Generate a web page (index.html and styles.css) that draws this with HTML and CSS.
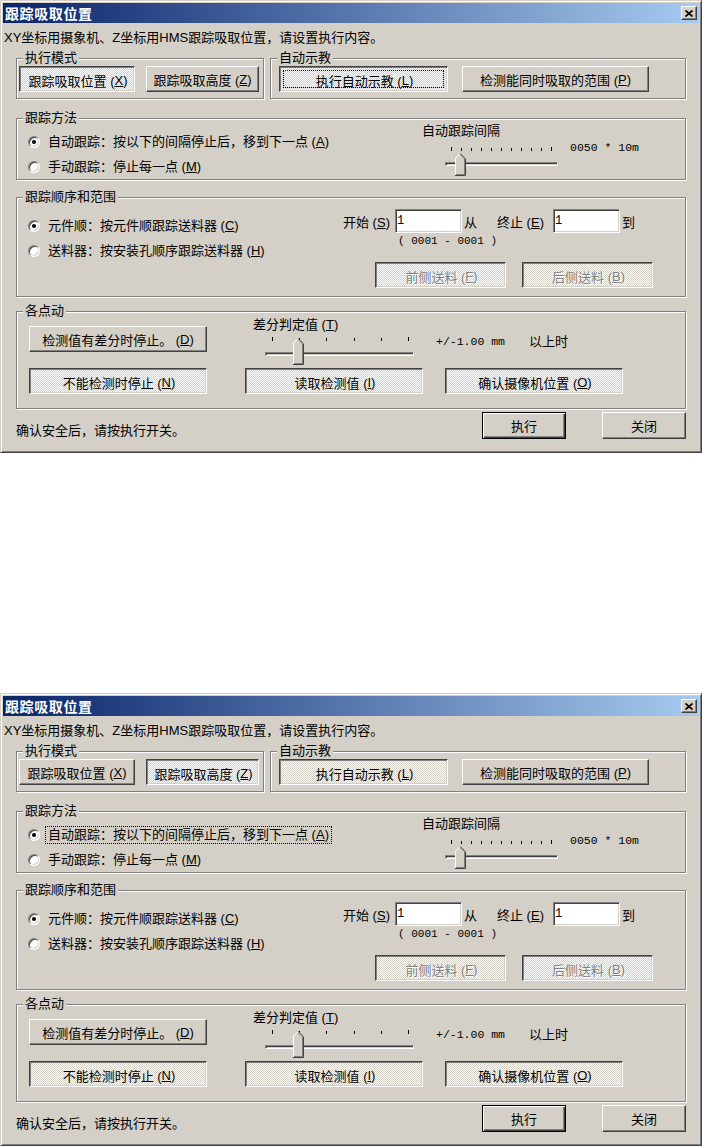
FILE: index.html
```html
<!DOCTYPE html>
<html lang="zh-CN">
<head>
    <meta charset="UTF-8">
    <title>跟踪吸取位置</title>
    <link rel="stylesheet" href="styles.css">
</head>
<body>
<div class="page">

<!-- 状态 1：执行自动示教 -->
<div class="dialog">
    <div class="titlebar">
        <span class="title">跟踪吸取位置</span>
        <span class="close"><svg width="8" height="7" viewBox="0 0 8 7"><path d="M0.5 0.5l7 6M7.5 0.5l-7 6" stroke="#000" stroke-width="1.7"/></svg></span>
    </div>
    <div class="client">
        <div class="desc">XY坐标用摄象机、Z坐标用HMS跟踪吸取位置，请设置执行内容。</div>

        <div class="row-top">
            <div class="group g-mode">
                <div class="legend">执行模式</div>
                <div class="btns">
                    <span class="btn on w-x">跟踪吸取位置 (<u>X</u>)</span>
                    <span class="btn w-z">跟踪吸取高度 (<u>Z</u>)</span>
                </div>
            </div>
            <div class="group g-teach">
                <div class="legend">自动示教</div>
                <div class="btns">
                    <span class="btn on focus w-l">执行自动示教 (<u>L</u>)</span>
                    <span class="btn w-p">检测能同时吸取的范围 (<u>P</u>)</span>
                </div>
            </div>
        </div>

        <div class="group g-method">
            <div class="legend">跟踪方法</div>
            <div class="method-body">
                <div class="radios r-method">
                    <div class="radio"><span class="dot checked"></span><span class="rlabel">自动跟踪：按以下的间隔停止后，移到下一点 (<u>A</u>)</span></div>
                    <div class="radio"><span class="dot"></span><span class="rlabel">手动跟踪：停止每一点 (<u>M</u>)</span></div>
                </div>
                <div class="interval">
                    <div class="cap">自动跟踪间隔</div>
                    <div class="slide-row">
                        <div class="trackbar tb-interval">
                            <div class="ticks"><i></i><i></i><i></i><i></i><i></i><i></i><i></i><i></i><i></i><i></i><i></i></div>
                            <div class="groove"></div>
                            <svg class="thumb" width="11" height="23" viewBox="0 0 11 23"><path d="M0 23V5L5 0L11 6V23Z" fill="#d4d0c8"/><path d="M0.5 22V5.2L5.2 0.5" stroke="#fff" fill="none"/><path d="M5.2 0.5L10.5 5.8V22.5H0" stroke="#404040" fill="none"/><path d="M5.5 1.8L9.5 5.8V21.5H1" stroke="#808080" fill="none"/></svg>
                        </div>
                        <span class="value">0050 * 10m</span>
                    </div>
                </div>
            </div>
        </div>

        <div class="group g-order">
            <div class="legend">跟踪顺序和范围</div>
            <div class="order-body">
                <div class="radios r-order">
                    <div class="radio"><span class="dot checked"></span><span class="rlabel">元件顺：按元件顺跟踪送料器 (<u>C</u>)</span></div>
                    <div class="radio"><span class="dot"></span><span class="rlabel">送料器：按安装孔顺序跟踪送料器 (<u>H</u>)</span></div>
                </div>
                <div class="range">
                    <div class="range-row">
                        <span class="lab-s">开始 (<u>S</u>)</span>
                        <input class="field" type="text" value="1">
                        <span class="lab-from">从</span>
                        <span class="lab-e">终止 (<u>E</u>)</span>
                        <input class="field" type="text" value="1">
                        <span class="lab-to">到</span>
                    </div>
                    <div class="range-hint">( 0001 - 0001 )</div>
                    <div class="side-btns">
                        <span class="btn on disabled w-side">前侧送料 (<u>F</u>)</span>
                        <span class="btn on disabled w-side">后侧送料 (<u>B</u>)</span>
                    </div>
                </div>
            </div>
        </div>

        <div class="group g-jog">
            <div class="legend">各点动</div>
            <div class="jog-row1">
                <span class="btn w-jog btn-diff">检测值有差分时停止。 (<u>D</u>)</span>
                <div class="diff">
                    <div class="cap">差分判定值 (<u>T</u>)</div>
                    <div class="slide-row">
                        <div class="trackbar tb-diff">
                            <div class="ticks"><i></i><i></i><i></i><i></i><i></i><i></i></div>
                            <div class="groove"></div>
                            <svg class="thumb" width="11" height="27" viewBox="0 0 11 27"><path d="M0 27V5L5 0L11 6V27Z" fill="#d4d0c8"/><path d="M0.5 26V5.2L5.2 0.5" stroke="#fff" fill="none"/><path d="M5.2 0.5L10.5 5.8V26.5H0" stroke="#404040" fill="none"/><path d="M5.5 1.8L9.5 5.8V25.5H1" stroke="#808080" fill="none"/></svg>
                        </div>
                        <span class="value">+/-1.00 mm</span>
                        <span class="unit">以上时</span>
                    </div>
                </div>
            </div>
            <div class="jog-row2">
                <span class="btn on w-jog">不能检测时停止 (<u>N</u>)</span>
                <span class="btn on w-jog">读取检测值 (<u>I</u>)</span>
                <span class="btn on w-jog">确认摄像机位置 (<u>O</u>)</span>
            </div>
        </div>

        <div class="footer">
            <span class="hint">确认安全后，请按执行开关。</span>
            <span class="btn default w-foot">执行</span>
            <span class="btn w-foot">关闭</span>
        </div>
    </div>
</div>

<!-- 状态 2：跟踪吸取高度 -->
<div class="dialog">
    <div class="titlebar">
        <span class="title">跟踪吸取位置</span>
        <span class="close"><svg width="8" height="7" viewBox="0 0 8 7"><path d="M0.5 0.5l7 6M7.5 0.5l-7 6" stroke="#000" stroke-width="1.7"/></svg></span>
    </div>
    <div class="client">
        <div class="desc">XY坐标用摄象机、Z坐标用HMS跟踪吸取位置，请设置执行内容。</div>

        <div class="row-top">
            <div class="group g-mode">
                <div class="legend">执行模式</div>
                <div class="btns">
                    <span class="btn w-x">跟踪吸取位置 (<u>X</u>)</span>
                    <span class="btn on w-z">跟踪吸取高度 (<u>Z</u>)</span>
                </div>
            </div>
            <div class="group g-teach">
                <div class="legend">自动示教</div>
                <div class="btns">
                    <span class="btn on w-l">执行自动示教 (<u>L</u>)</span>
                    <span class="btn w-p">检测能同时吸取的范围 (<u>P</u>)</span>
                </div>
            </div>
        </div>

        <div class="group g-method">
            <div class="legend">跟踪方法</div>
            <div class="method-body">
                <div class="radios r-method">
                    <div class="radio"><span class="dot checked"></span><span class="rlabel focus">自动跟踪：按以下的间隔停止后，移到下一点 (<u>A</u>)</span></div>
                    <div class="radio"><span class="dot"></span><span class="rlabel">手动跟踪：停止每一点 (<u>M</u>)</span></div>
                </div>
                <div class="interval">
                    <div class="cap">自动跟踪间隔</div>
                    <div class="slide-row">
                        <div class="trackbar tb-interval">
                            <div class="ticks"><i></i><i></i><i></i><i></i><i></i><i></i><i></i><i></i><i></i><i></i><i></i></div>
                            <div class="groove"></div>
                            <svg class="thumb" width="11" height="23" viewBox="0 0 11 23"><path d="M0 23V5L5 0L11 6V23Z" fill="#d4d0c8"/><path d="M0.5 22V5.2L5.2 0.5" stroke="#fff" fill="none"/><path d="M5.2 0.5L10.5 5.8V22.5H0" stroke="#404040" fill="none"/><path d="M5.5 1.8L9.5 5.8V21.5H1" stroke="#808080" fill="none"/></svg>
                        </div>
                        <span class="value">0050 * 10m</span>
                    </div>
                </div>
            </div>
        </div>

        <div class="group g-order">
            <div class="legend">跟踪顺序和范围</div>
            <div class="order-body">
                <div class="radios r-order">
                    <div class="radio"><span class="dot checked"></span><span class="rlabel">元件顺：按元件顺跟踪送料器 (<u>C</u>)</span></div>
                    <div class="radio"><span class="dot"></span><span class="rlabel">送料器：按安装孔顺序跟踪送料器 (<u>H</u>)</span></div>
                </div>
                <div class="range">
                    <div class="range-row">
                        <span class="lab-s">开始 (<u>S</u>)</span>
                        <input class="field" type="text" value="1">
                        <span class="lab-from">从</span>
                        <span class="lab-e">终止 (<u>E</u>)</span>
                        <input class="field" type="text" value="1">
                        <span class="lab-to">到</span>
                    </div>
                    <div class="range-hint">( 0001 - 0001 )</div>
                    <div class="side-btns">
                        <span class="btn on disabled w-side">前侧送料 (<u>F</u>)</span>
                        <span class="btn on disabled w-side">后侧送料 (<u>B</u>)</span>
                    </div>
                </div>
            </div>
        </div>

        <div class="group g-jog">
            <div class="legend">各点动</div>
            <div class="jog-row1">
                <span class="btn w-jog btn-diff">检测值有差分时停止。 (<u>D</u>)</span>
                <div class="diff">
                    <div class="cap">差分判定值 (<u>T</u>)</div>
                    <div class="slide-row">
                        <div class="trackbar tb-diff">
                            <div class="ticks"><i></i><i></i><i></i><i></i><i></i><i></i></div>
                            <div class="groove"></div>
                            <svg class="thumb" width="11" height="27" viewBox="0 0 11 27"><path d="M0 27V5L5 0L11 6V27Z" fill="#d4d0c8"/><path d="M0.5 26V5.2L5.2 0.5" stroke="#fff" fill="none"/><path d="M5.2 0.5L10.5 5.8V26.5H0" stroke="#404040" fill="none"/><path d="M5.5 1.8L9.5 5.8V25.5H1" stroke="#808080" fill="none"/></svg>
                        </div>
                        <span class="value">+/-1.00 mm</span>
                        <span class="unit">以上时</span>
                    </div>
                </div>
            </div>
            <div class="jog-row2">
                <span class="btn on w-jog">不能检测时停止 (<u>N</u>)</span>
                <span class="btn on w-jog">读取检测值 (<u>I</u>)</span>
                <span class="btn on w-jog">确认摄像机位置 (<u>O</u>)</span>
            </div>
        </div>

        <div class="footer">
            <span class="hint">确认安全后，请按执行开关。</span>
            <span class="btn default w-foot">执行</span>
            <span class="btn w-foot">关闭</span>
        </div>
    </div>
</div>

</div>
</body>
</html>
```

FILE: styles.css
```css
body {
    margin: 0;
    background: #fff;
    font-family: "Liberation Sans", "Noto Sans CJK SC", sans-serif;
    font-size: 13px;
    color: #000;
}
u {
    text-decoration: underline;
    text-underline-offset: 1px;
}
.page {
    display: flex;
    flex-direction: column;
    gap: 240px;
}

/* 窗口 */
.dialog {
    width: 702px;
    height: 453px;
    box-sizing: border-box;
    padding: 2px;
    background: #d4d0c8;
    border: 1px solid;
    border-color: #d4d0c8 #404040 #404040 #d4d0c8;
    box-shadow: inset 1px 1px #fff, inset -1px -1px #808080;
}
.titlebar {
    height: 20px;
    display: flex;
    align-items: center;
    justify-content: space-between;
    padding: 0 2px;
    background: linear-gradient(to right, #0a246a, #a6caf0);
}
.title {
    color: #fff;
    font-weight: bold;
    font-size: 14px;
    letter-spacing: 0.6px;
}
.close {
    width: 16px;
    height: 14px;
    box-sizing: border-box;
    display: flex;
    align-items: center;
    justify-content: center;
    background: #d4d0c8;
    border: 1px solid;
    border-color: #fff #404040 #404040 #fff;
    box-shadow: inset -1px -1px #808080;
}
.client {
    padding: 0 13px;
}
.desc {
    height: 29px;
    line-height: 29px;
    margin: 0 -12px;
    white-space: nowrap;
}

/* 分组框 */
.group {
    box-sizing: border-box;
    border: 1px solid #808080;
    box-shadow: inset 1px 1px #fff, 1px 1px #fff;
}
.legend {
    width: fit-content;
    height: 16px;
    line-height: 16px;
    margin: -9px 0 0 6px;
    padding: 0 2px;
    background: #d4d0c8;
}

/* 按钮 */
.btn {
    display: flex;
    align-items: center;
    justify-content: center;
    box-sizing: border-box;
    height: 26px;
    white-space: nowrap;
    background: #d4d0c8;
    border: 1px solid;
    border-color: #fff #404040 #404040 #fff;
    box-shadow: inset -1px -1px #808080;
}
.btn.on {
    padding: 2px 0 0 2px;
    border-color: #404040 #fff #fff #404040;
    box-shadow: inset 1px 1px #808080, inset -1px -1px #d4d0c8;
    background: repeating-conic-gradient(#fff 0 25%, #d4d0c8 0 50%) 0 0 / 2px 2px;
}
.btn.focus {
    outline: 1px dotted #000;
    outline-offset: -5px;
}
.btn.disabled {
    color: #808080;
    text-shadow: 1px 1px #fff;
}
.btn.default {
    border: 1px solid #000;
    box-shadow: inset 1px 1px #fff, inset -1px -1px #404040, inset -2px -2px #808080;
}

/* 第一行 */
.row-top {
    display: flex;
    height: 41px;
    margin-top: 6px;
}
.g-mode {
    width: 248px;
}
.g-teach {
    width: 416px;
    margin-left: 6px;
}
.btns {
    display: flex;
}
.g-mode .btns {
    padding-left: 2px;
    gap: 11px;
}
.g-teach .btns {
    padding-left: 8px;
    gap: 14px;
}
.w-x { width: 116px; }
.w-z { width: 113px; }
.w-l { width: 169px; }
.w-p { width: 187px; }

/* 单选 */
.radio {
    display: flex;
    align-items: center;
    height: 25px;
    padding-left: 11px;
    white-space: nowrap;
}
.dot {
    position: relative;
    width: 12px;
    height: 12px;
    box-sizing: border-box;
    margin-right: 6px;
    border-radius: 50%;
    background: #fff;
    border: 1px solid;
    border-color: #808080 #fff #fff #808080;
    box-shadow: inset 1px 1px #404040, inset -1px -1px #d4d0c8;
}
.dot.checked::after {
    content: "";
    position: absolute;
    left: 3px;
    top: 3px;
    width: 4px;
    height: 4px;
    border-radius: 50%;
    background: #000;
}
.rlabel {
    padding: 0 2px;
    line-height: 16px;
}
.rlabel.focus {
    outline: 1px dotted #000;
}

/* 跟踪方法 */
.g-method {
    height: 62px;
    margin-top: 19px;
}
.method-body {
    display: flex;
}
.r-method {
    width: 405px;
    padding-top: 3px;
}
.interval {
    margin-top: -3px;
}
.cap {
    height: 16px;
    line-height: 16px;
    white-space: nowrap;
}
.slide-row {
    display: flex;
    align-items: flex-start;
}
.trackbar {
    position: relative;
}
.ticks {
    display: flex;
    justify-content: space-between;
    align-items: flex-end;
    height: 4px;
}
.ticks i {
    width: 1px;
    height: 3px;
    background: #000;
}
.ticks i:first-child,
.ticks i:last-child {
    height: 4px;
}
.groove {
    height: 4px;
    box-sizing: border-box;
    border: 1px solid;
    border-color: #808080 #fff #fff #808080;
    box-shadow: inset 1px 1px #404040, inset -1px -1px #d4d0c8;
}
.thumb {
    position: absolute;
    display: block;
}
.tb-interval {
    width: 113px;
    height: 38px;
    margin-left: 23px;
}
.tb-interval .ticks {
    width: 101px;
    margin: 8px 0 0 6px;
}
.tb-interval .groove {
    margin-top: 11px;
}
.tb-interval .thumb {
    left: 10px;
    top: 14px;
}
.value {
    font-family: "Liberation Mono", monospace;
    font-size: 11.5px;
    line-height: 16px;
    margin-top: 1px;
    white-space: pre;
}
.interval .value {
    margin-left: 12px;
}

/* 跟踪顺序和范围 */
.g-order {
    height: 100px;
    margin-top: 17px;
}
.order-body {
    display: flex;
}
.r-order {
    width: 326px;
    padding-top: 8px;
}
.range-row {
    display: flex;
    align-items: center;
    height: 24px;
    margin-top: 4px;
    white-space: nowrap;
}
.lab-s { width: 52px; }
.lab-from { width: 35px; box-sizing: border-box; padding-left: 2px; }
.lab-e { width: 56px; }
.lab-to { padding-left: 2px; }
.field {
    width: 67px;
    height: 24px;
    box-sizing: border-box;
    margin: 0;
    padding: 0 0 0 1px;
    font: inherit;
    font-family: "Liberation Mono", monospace;
    font-size: 12px;
    background: #fff;
    border: 1px solid;
    border-color: #808080 #fff #fff #808080;
    box-shadow: inset 1px 1px #404040, inset -1px -1px #d4d0c8;
    outline: none;
}
.range-hint {
    margin-left: 55px;
    font-family: "Liberation Mono", monospace;
    font-size: 11px;
    line-height: 16px;
    white-space: pre;
}
.side-btns {
    display: flex;
    gap: 16px;
    margin-top: 13px;
    padding-left: 32px;
}
.w-side { width: 131px; }

/* 各点动 */
.g-jog {
    height: 98px;
    margin-top: 14px;
}
.jog-row1 {
    display: flex;
    height: 49px;
}
.w-jog { width: 178px; }
.btn-diff {
    margin: 7px 0 0 12px;
}
.diff {
    margin: -2px 0 0 46px;
}
.tb-diff {
    width: 149px;
    height: 32px;
    margin-left: 12px;
}
.tb-diff .ticks {
    width: 137px;
    margin: 4px 0 0 7px;
}
.tb-diff .groove {
    margin-top: 11px;
}
.tb-diff .thumb {
    left: 28px;
    top: 5px;
}
.diff .value {
    margin-left: 22px;
}
.unit {
    margin: 1px 0 0 24px;
    line-height: 16px;
    white-space: nowrap;
}
.jog-row2 {
    display: flex;
    padding-left: 12px;
}
.jog-row2 .btn + .btn:nth-child(2) { margin-left: 38px; }
.jog-row2 .btn:nth-child(3) { margin-left: 22px; }

/* 底部 */
.footer {
    display: flex;
    height: 27px;
    margin-top: 3px;
}
.hint {
    align-self: flex-end;
    line-height: 16px;
    white-space: nowrap;
}
.w-foot {
    width: 84px;
    height: 27px;
}
.footer .default {
    margin-left: auto;
}
.footer .btn + .btn {
    margin-left: 36px;
}
```
